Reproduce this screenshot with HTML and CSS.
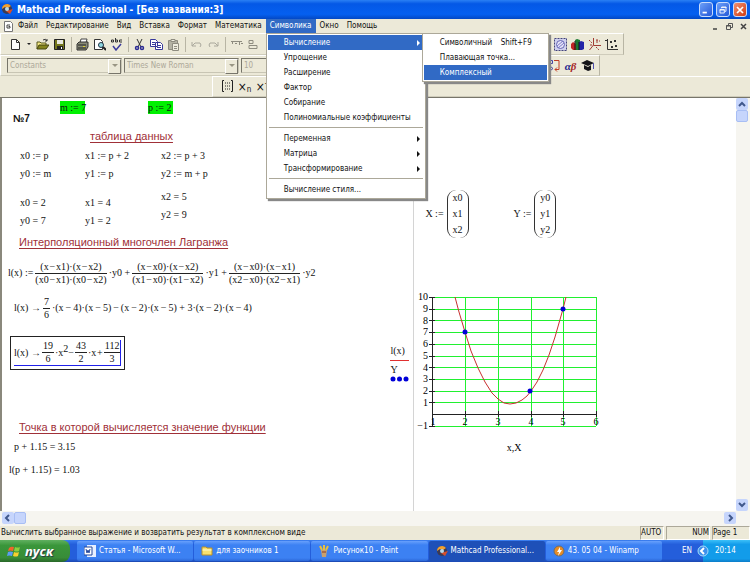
FILE: index.html
```html
<!DOCTYPE html>
<html lang="ru">
<head>
    <meta charset="UTF-8">
    <meta name="viewport" content="width=device-width, initial-scale=1.0">
    <title>Mathcad Professional</title>
    <link rel="stylesheet" href="styles.css">
</head>
<body>
    <!-- title bar -->
    <header class="titlebar">
        <svg class="icon" viewBox="0 0 13 13"><circle cx="6" cy="6" r="5" fill="#3d3a52"/><path d="M1 6a5 5 0 0 1 9-3L7 5 4 4z" fill="#f0a030"/><path d="M5 8l7-2-3 5z" fill="#d8502c"/><circle cx="6" cy="6" r="2" fill="#b8d8e8"/></svg>
        <h1 class="titlebar-text">Mathcad Professional - [Без названия:3]</h1>
        <button class="win-btn" aria-label="Свернуть"><svg viewBox="0 0 14 14"><path d="M3 10h5" stroke="#fff" stroke-width="2"/></svg></button>
        <button class="win-btn" aria-label="Восстановить"><svg viewBox="0 0 14 14" fill="none" stroke="#fff"><path d="M5.500 5V3.500h5v5H9M5 4h6"/><path d="M3.500 6.500h5v4h-5zM3 7h6"/></svg></button>
        <button class="win-btn win-close" aria-label="Закрыть"><svg viewBox="0 0 14 14"><path d="M3.500 3.500l7 7m0-7l-7 7" stroke="#fff" stroke-width="2"/></svg></button>
    </header>

    <!-- menu -->
    <nav class="menubar">
        <svg class="doc-icon" viewBox="0 0 11 11"><path d="M1.500.5h6l2 2v8h-8z" fill="#fff" stroke="#777"/><path d="M7 4H4v3h3V5.500H5.500" fill="none" stroke="#444"/></svg>
        <button class="menu-btn">Файл</button>
        <button class="menu-btn">Редактирование</button>
        <button class="menu-btn">Вид</button>
        <button class="menu-btn">Вставка</button>
        <button class="menu-btn">Формат</button>
        <button class="menu-btn">Математика</button>
        <div class="menu-holder">
            <button class="menu-btn active">Символика</button>
            <div class="menu">
                <div class="menu-holder">
                    <button class="menu-item active has-sub">Вычисление</button>
                    <div class="menu submenu">
                        <button class="menu-item"><span>Символичный</span><span>Shift+F9</span></button>
                        <button class="menu-item">Плавающая точка...</button>
                        <button class="menu-item active">Комплексный</button>
                    </div>
                </div>
                <button class="menu-item">Упрощение</button>
                <button class="menu-item">Расширение</button>
                <button class="menu-item">Фактор</button>
                <button class="menu-item">Собирание</button>
                <button class="menu-item">Полиномиальные коэффициенты</button>
                <hr class="menu-line">
                <button class="menu-item has-sub">Переменная</button>
                <button class="menu-item has-sub">Матрица</button>
                <button class="menu-item has-sub">Трансформирование</button>
                <hr class="menu-line">
                <button class="menu-item">Вычисление стиля...</button>
            </div>
        </div>
        <button class="menu-btn">Окно</button>
        <button class="menu-btn">Помощь</button>
        <div class="doc-btns">
            <button class="doc-btn" aria-label="Свернуть документ"><svg viewBox="0 0 9 9"><path d="M2 7h4" stroke="#444" stroke-width="1.500"/></svg></button>
            <button class="doc-btn" aria-label="Восстановить документ"><svg viewBox="0 0 9 9" fill="none" stroke="#555"><path d="M3.500 3V1.500h4v4H6M1.500 3.500h4v4h-4zM1 4h5"/></svg></button>
            <button class="doc-btn" aria-label="Закрыть документ"><svg viewBox="0 0 9 9"><path d="M2 2l5 5m0-5l-5 5" stroke="#444" stroke-width="1.500"/></svg></button>
        </div>
    </nav>

    <!-- toolbars -->
    <div class="toolbars">
        <div class="toolbar toolbar-main">
            <button class="tool" aria-label="Создать"><svg viewBox="0 0 13 13"><path d="M2.500 1.500h5l3 3v7h-8z" fill="#fff" stroke="#333"/><path d="M7.500 1.500v3h3" fill="none" stroke="#333"/></svg></button>
            <span class="caret"></span>
            <button class="tool" aria-label="Открыть"><svg viewBox="0 0 13 13"><path d="M1 11V4h3l1 1h5v2" fill="#f4e884" stroke="#55551a"/><path d="M1 11l2-4h10l-3 4z" fill="#85851d" stroke="#44440f"/><path d="M7 2q3-2 4 1m0-2v2H9" fill="none" stroke="#333"/></svg></button>
            <button class="tool" aria-label="Сохранить"><svg viewBox="0 0 13 13"><path d="M1.500 1.500h10v10h-10z" fill="#74761c" stroke="#222"/><path d="M4 2h6v4H4z" fill="#e8e8e0"/><path d="M4 8h6v4H4z" fill="#222"/><path d="M8 9h1v2H8z" fill="#fff"/></svg></button>
            <span class="tool-line"></span>
            <button class="tool" aria-label="Печать"><svg viewBox="0 0 13 13"><path d="M4 5l1-4h6l-1 4" fill="#fff" stroke="#444"/><path d="M1 6l2-2h9v5l-2 3H1z" fill="#888a78" stroke="#333"/><path d="M2 7h8M2 10h8" stroke="#222"/><path d="M7 8.500h2" stroke="#e4d430"/></svg></button>
            <button class="tool" aria-label="Просмотр"><svg viewBox="0 0 13 13"><path d="M1.500 1.500h6l2 2v8h-8z" fill="#fff" stroke="#333"/><circle cx="8" cy="7" r="2.500" fill="#8fd8e0" stroke="#234"/><path d="M10 9l3 3" stroke="#222" stroke-width="2"/></svg></button>
            <button class="tool" aria-label="Орфография"><svg viewBox="0 0 13 13" fill="none"><path d="M1.500 4V2h2v2h-2M5.500 0v4h2V2h-2M12 2H9.500v2H12" stroke="#333"/><path d="M3 8l3 4 5-6" stroke="#3a3a9c" stroke-width="1.500"/></svg></button>
            <span class="tool-line"></span>
            <button class="tool" aria-label="Вырезать"><svg viewBox="0 0 13 13" fill="none"><path d="M4 1l4 8M9 1L5 9" stroke="#333"/><circle cx="4" cy="10" r="1.500" stroke="#2c2c94" stroke-width="1.500"/><circle cx="9" cy="10" r="1.500" stroke="#2c2c94" stroke-width="1.500"/></svg></button>
            <button class="tool" aria-label="Копировать"><svg viewBox="0 0 13 13" fill="#fff" stroke="#38389a"><path d="M.5 1.500h5l2 2v5h-7zM5.500 4.500h5l2 2v5h-7z"/><path d="M2 4.500h3M2 6.500h3M7 7.500h4M7 9.500h4"/></svg></button>
            <button class="tool" aria-label="Вставить"><svg viewBox="0 0 13 13" stroke="#8e8c80"><path d="M1.500 2.500h9v9h-9z" fill="#b4b2a4"/><path d="M4 1.500h4v2H4zM5.500 5.500h6v7h-6z" fill="#eeecdf"/><path d="M7 8.500h3M7 10.500h3"/></svg></button>
            <span class="tool-line"></span>
            <button class="tool" aria-label="Отменить"><svg viewBox="0 0 13 13" fill="none" stroke="#aaa89c"><path d="M2 4v4h4M2 8l3-3h5q2 2 0 4"/></svg></button>
            <button class="tool" aria-label="Вернуть"><svg viewBox="0 0 13 13" fill="none" stroke="#aaa89c"><path d="M11 4v4H7M11 8L8 5H3q-2 2 0 4"/></svg></button>
            <span class="tool-line"></span>
            <button class="tool" aria-label="Выровнять поперёк"><svg viewBox="0 0 13 13" fill="none" stroke="#8e8c80"><path d="M1 3.500h11M2.500 3v3M5 5.500h2M9.500 3v4M11 5.500h2"/></svg></button>
            <button class="tool" aria-label="Выровнять вниз"><svg viewBox="0 0 13 13" fill="none" stroke="#8e8c80"><path d="M2 2.500h4v3H2zM2 7.500h8v3H2z"/></svg></button>
            <div class="tool-group">
                <button class="tool" aria-label="Вычислить"><svg viewBox="0 0 13 13"><circle cx="6" cy="6" r="5" fill="#3f8a2c"/></svg></button>
                <button class="tool" aria-label="Мастер"><svg viewBox="0 0 13 13"><path d="M.5.5h12v12H.5z" fill="#cfd0ee" stroke="#44447c" stroke-dasharray="2 1"/><circle cx="6.500" cy="6.500" r="4" fill="#e6e4f8" stroke="#6666b4"/><path d="M3 8l6-5M4 10l6-5" stroke="#7a7ac8"/></svg></button>
                <button class="tool" aria-label="Графики"><svg viewBox="0 0 13 13"><path d="M0 6l2-2 3 2v6H2l-2-2z" fill="#c02424"/><path d="M4 2l2-1 3 1v10H5z" fill="#187830"/><path d="M8 4l2-1 3 1v7l-2 1H8z" fill="#2424a8"/><path d="M4 3v9M8 4v8" stroke="#111"/></svg></button>
                <button class="tool" aria-label="Оси"><svg viewBox="0 0 13 13" fill="none" stroke="#a03c34"><path d="M5.500 0v7l-4 5M5.500 7.500H13"/><path d="M1 2l3 3M9 1v4M8 3h4M8 9l3 3M2 7h2" stroke-dasharray="2 1"/></svg></button>
                <button class="tool" aria-label="Точки"><svg viewBox="0 0 13 13"><path d="M2.500 1v10.500H13M0 2.500h3" fill="none" stroke="#333"/><path d="M5 3h2v2H5zM9 2h2v2H9zM6 8h2v2H6zM10 7h2v2h-2z" fill="#333"/></svg></button>
            </div>
        </div>
        <div class="toolbar toolbar-format">
            <label class="combo"><select disabled aria-label="Стиль"><option>Constants</option></select></label>
            <label class="combo"><select disabled aria-label="Шрифт"><option>Times New Roman</option></select></label>
            <label class="combo combo-size"><select disabled aria-label="Размер"><option>10</option></select></label>
            <div class="tool-group">
                <button class="tool" aria-label="Программирование"><svg viewBox="0 0 13 13" fill="none"><path d="M1.500 1.500h4v3h-4zM3.500 5v3M1 9.500l2.500-2 2.500 2-2.500 2z" stroke="#4646a8"/><path d="M7 1.500h5v9H8m2-2l-2 2 2 2" stroke="#c03c24"/></svg></button>
                <button class="tool tool-greek" aria-label="Греческие буквы"><span class="alpha">α</span><span class="beta">β</span></button>
                <button class="tool" aria-label="Символьные вычисления"><svg viewBox="0 0 13 13"><path d="M0 4l6-3 7 3-6 3zM3 6v4l4 2 3-1V6L7 8z" fill="#141418"/><path d="M12.500 4v6" stroke="#5050b0"/></svg></button>
            </div>
        </div>
        <div class="toolbar toolbar-math">
            <button class="tool" aria-label="Матрица"><svg viewBox="0 0 13 13" fill="none" stroke="#222"><path d="M3 .5H1.500v11H3M10 .5h1.500v11H10"/><path d="M4 3h6M4 6h6M4 9h6" stroke-dasharray="1 1"/></svg></button>
            <button class="tool tool-x" aria-label="Индекс">×<sub>n</sub></button>
            <button class="tool tool-x" aria-label="Обратная">×<sup>-</sup></button>
        </div>
    </div>

    <!-- worksheet -->
    <main class="workspace">
        <section class="page page-left">
            <div class="consts">
                <b class="number">№7</b>
                <span class="const">m := 7</span>
                <span class="const">p := 2</span>
            </div>
            <h2 class="caption caption-table">таблица данных</h2>
            <div class="data">
                <div class="data-col"><span>x0 := p</span><span>y0 := m</span><span class="result">x0 = 2</span><span>y0 = 7</span></div>
                <div class="data-col"><span>x1 := p + 2</span><span>y1 := p</span><span class="result">x1 = 4</span><span>y1 = 2</span></div>
                <div class="data-col data-high"><span>x2 := p + 3</span><span>y2 := m + p</span><span class="result">x2 = 5</span><span>y2 = 9</span></div>
            </div>
            <h2 class="caption">Интерполяционный многочлен Лагранжа</h2>
            <div class="math math-define">
                <span>l(x) :=</span>
                <span class="frac"><span>(x&hairsp;−&hairsp;x1)·(x&hairsp;−&hairsp;x2)</span><span>(x0&hairsp;−&hairsp;x1)·(x0&hairsp;−&hairsp;x2)</span></span>
                <span>·y0 +</span>
                <span class="frac"><span>(x&hairsp;−&hairsp;x0)·(x&hairsp;−&hairsp;x2)</span><span>(x1&hairsp;−&hairsp;x0)·(x1&hairsp;−&hairsp;x2)</span></span>
                <span>·y1 +</span>
                <span class="frac"><span>(x&hairsp;−&hairsp;x0)·(x&hairsp;−&hairsp;x1)</span><span>(x2&hairsp;−&hairsp;x0)·(x2&hairsp;−&hairsp;x1)</span></span>
                <span>·y2</span>
            </div>
            <div class="math math-step">
                <span>l(x) →</span>
                <span class="frac"><span>7</span><span>6</span></span>
                <span>·(x&thinsp;−&thinsp;4)·(x&thinsp;−&thinsp;5)&thinsp;−&thinsp;(x&thinsp;−&thinsp;2)·(x&thinsp;−&thinsp;5) + 3·(x&thinsp;−&thinsp;2)·(x&thinsp;−&thinsp;4)</span>
            </div>
            <div class="answer">
                <div class="math math-cursor">
                    <span>l(x) →</span>
                    <span class="frac"><span>19</span><span>6</span></span>
                    <span>·x<sup>2</sup>−</span>
                    <span class="frac"><span>43</span><span>2</span></span>
                    <span>·x&hairsp;+</span>
                    <span class="frac"><span>112</span><span>3</span></span>
                </div>
            </div>
            <h2 class="caption">Точка в которой вычисляется значение функции</h2>
            <p class="value">p + 1.15 = 3.15</p>
            <p class="value value-out">l(p + 1.15) = 1.03</p>
        </section>
        <section class="page page-right">
            <div class="vectors">
                <div class="math"><span>X :=</span><span class="matrix"><span>x0</span><span>x1</span><span>x2</span></span></div>
                <div class="math"><span>Y :=</span><span class="matrix"><span>y0</span><span>y1</span><span>y2</span></span></div>
            </div>
            <div class="plot">
                <div class="legend">
                    <span class="legend-line">l(x)</span>
                    <span>Y</span>
                    <svg width="19" height="6" viewBox="0 0 19 6" fill="#0000d8"><circle cx="3" cy="3" r="2.500"/><circle cx="9.500" cy="3" r="2.500"/><circle cx="16" cy="3" r="2.500"/></svg>
                </div>
                <!-- 33px per unit of x, 12px per unit of y, origin corner at (18, 6) -->
                <svg class="graph" width="188" height="162" viewBox="0 0 188 162">
                    <path class="grid" d="M51 6v129M84 6v129M117 6v129M149 6v129M182 6v129M18 6h164M18 18h164M18 29h164M18 41h164M18 53h164M18 65h164M18 76h164M18 88h164M18 100h164M18 111h164M18 135h164"/>
                    <path class="axis" d="M18 6v129M18 123h164M15 6h6M15 18h6M15 29h6M15 41h6M15 53h6M15 65h6M15 76h6M15 88h6M15 100h6M15 111h6M15 135h6M51 120v6M84 120v6M117 120v6M149 120v6M182 120v6"/>
                    <path class="curve" d="M41 6L45 21 51 41 57 60 64 77 71 91 78 102 84 108 90 112 96 113 102 112 108 109 113 105 117 100 123 91 129 79 135 64 141 46 149 18 152 6"/>
                    <g fill="#0000d8"><circle cx="51" cy="41" r="2.500"/><circle cx="116" cy="100" r="2.500"/><circle cx="149" cy="18" r="2.500"/></g>
                    <g text-anchor="end">
                        <text x="14" y="9">10</text><text x="14" y="21">9</text><text x="14" y="33">8</text><text x="14" y="44">7</text><text x="14" y="56">6</text><text x="14" y="68">5</text><text x="14" y="80">4</text><text x="14" y="91">3</text><text x="14" y="103">2</text><text x="14" y="115">1</text><text x="14" y="138">−1</text>
                    </g>
                    <g text-anchor="middle">
                        <text x="19" y="134">1</text><text x="51" y="134">2</text><text x="84" y="134">3</text><text x="117" y="134">4</text><text x="149" y="134">5</text><text x="182" y="134">6</text>
                        <text x="100" y="160">x,X</text>
                    </g>
                </svg>
            </div>
        </section>
        <div class="scroll scroll-y">
            <button class="scroll-btn" aria-label="Вверх"><svg viewBox="0 0 12 12"><path d="M3 8l3-3 3 3"/></svg></button>
            <span class="scroll-thumb"></span>
            <button class="scroll-btn scroll-end" aria-label="Вниз"><svg viewBox="0 0 12 12"><path d="M3 4l3 3 3-3"/></svg></button>
        </div>
    </main>
    <div class="scroll scroll-x">
        <button class="scroll-btn" aria-label="Влево"><svg viewBox="0 0 12 12"><path d="M7 3L4 6l3 3"/></svg></button>
        <span class="scroll-thumb"></span>
        <button class="scroll-btn scroll-end" aria-label="Вправо"><svg viewBox="0 0 12 12"><path d="M5 3l3 3-3 3"/></svg></button>
    </div>

    <div class="status">
        <span class="status-text">Вычислить выбранное выражение и возвратить результат в комплексном виде</span>
        <span class="status-cell">AUTO</span>
        <span class="status-cell status-num">NUM</span>
        <span class="status-cell status-page">Page 1</span>
    </div>

    <!-- taskbar -->
    <footer class="taskbar">
        <button class="start">
            <svg viewBox="0 0 14 13"><path d="M2 3q2-2 5-1L6 6Q3 5 1 6z" fill="#f0642c"/><path d="M8 2q3 1 5 0l-1 4q-2 1-5 0z" fill="#8cd03c"/><path d="M1 7q2-1 5 0l-1 4q-3-1-5 0z" fill="#5c9cf4"/><path d="M7 7q3 1 5 0l-1 4q-2 1-5 0z" fill="#f8d030"/></svg>
            пуск
        </button>
        <div class="tasks">
            <button class="task"><svg viewBox="0 0 12 12"><path d="M3 0h9v12H3z" fill="#e8f0ff"/><path d="M0 2h8v8H0z" fill="#fff" stroke="#24489c"/><path d="M2 4l1 4 1-3 1 3 1-4" fill="none" stroke="#24489c"/></svg><span>Статья - Microsoft W...</span></button>
            <button class="task"><svg viewBox="0 0 12 12"><path d="M1 2h4l1 1h5v7H1z" fill="#f8e070" stroke="#b89028"/><path d="M1.500 5h9" stroke="#fffbd0"/></svg><span>для заочников 1</span></button>
            <button class="task"><svg viewBox="0 0 12 12"><path d="M3 5h6l-1 7H4z" fill="#c8a070"/><path d="M4 5L2 1M6 5V0M8 5l2-4" stroke="#e8c040" stroke-width="2"/><path d="M4 7h4" stroke="#8c3820"/></svg><span>Рисунок10 - Paint</span></button>
            <button class="task task-active"><svg viewBox="0 0 12 12"><circle cx="6" cy="6" r="5" fill="#3d3a52"/><path d="M1 6a5 5 0 0 1 9-3L7 5 4 4z" fill="#f0a030"/><path d="M5 8l7-2-3 5z" fill="#d8502c"/><circle cx="6" cy="6" r="2" fill="#b8d8e8"/></svg><span>Mathcad Professional...</span></button>
            <button class="task"><svg viewBox="0 0 12 12"><circle cx="6" cy="6" r="5" fill="#e88c24" stroke="#6c6c6c"/><path d="M7 2L4 7h2l-1 4 4-6H7z" fill="#fff"/></svg><span>43. 05 04 - Winamp</span></button>
        </div>
        <span class="lang">EN</span>
        <div class="tray">
            <button class="tray-btn" aria-label="Показать значки"><svg viewBox="0 0 12 12"><circle cx="6" cy="6" r="5" fill="#3c90ec" stroke="#a4dcfc"/><path d="M7 3L4 6l3 3" fill="none" stroke="#fff" stroke-width="2"/></svg></button>
            <time>20:14</time>
        </div>
    </footer>
</body>
</html>
```
FILE: styles.css
```css
* {
    box-sizing: border-box;
}
body {
    display: flex;
    flex-direction: column;
    height: 100vh;
    margin: 0;
    overflow: hidden;
    background: #ece9d8;
    color: #111;
    font: 8px/12px "DejaVu Sans Condensed", "DejaVu Sans", sans-serif;
}
button {
    padding: 0;
    border: none;
    background: none;
    color: inherit;
    font: inherit;
    white-space: nowrap;
}
svg {
    display: block;
    flex: none;
}
/* title bar */
.titlebar {
    display: flex;
    flex: none;
    align-items: center;
    gap: 3px;
    height: 19px;
    padding: 0 3px 0 1px;
    background: linear-gradient(#2a80f4, #0458e6 20%, #0560f0 75%, #0348c4);
    color: #fff;
}
.icon {
    width: 13px;
    height: 13px;
}
.titlebar-text {
    flex: 1;
    margin: 0;
    font-size: 10px;
    font-weight: bold;
}
.win-btn {
    width: 14px;
    height: 15px;
    border: 1px solid #c8dcfc;
    border-radius: 3px;
    background: linear-gradient(135deg, #6ca0f8, #2458d8);
}
.win-close {
    background: linear-gradient(135deg, #f09070, #d03c14);
}
/* menu */
.menubar {
    display: flex;
    flex: none;
    align-items: center;
    height: 14px;
    padding-left: 3px;
}
.doc-icon {
    width: 11px;
    height: 11px;
}
.menu-btn {
    display: block;
    height: 14px;
    padding: 0 4px;
}
.active {
    background: #316ac5;
    color: #fff;
}
.menu-holder {
    position: relative;
}
.menu {
    position: absolute;
    top: 14px;
    left: 0;
    z-index: 2;
    width: 160px;
    padding: 1px;
    border: 1px solid #aca899;
    background: #fff;
    box-shadow: 2px 2px 1px #888;
    color: #111;
}
.submenu {
    top: -2px;
    left: 154px;
    width: 127px;
}
.menu-item {
    display: flex;
    align-items: center;
    justify-content: space-between;
    width: 100%;
    height: 15px;
    padding: 0 15px 0 16px;
}
.has-sub {
    padding-right: 4px;
}
.has-sub::after {
    content: "";
    border: 3px solid transparent;
    border-left-color: currentColor;
    border-right: none;
}
.menu-line {
    height: 1px;
    margin: 2px 1px 3px;
    border: none;
    background: #aca899;
}
.doc-btns {
    display: flex;
    gap: 5px;
    margin-left: auto;
    padding-right: 2px;
}
.doc-btn {
    width: 9px;
    height: 9px;
}
/* toolbars */
.toolbars {
    flex: none;
    border-bottom: 1px solid #77756a;
}
.toolbar {
    display: flex;
    align-items: center;
    height: 21px;
    padding-left: 6px;
    border: 1px solid;
    border-color: #fff #b8b5a4 #cfccbb #fff;
}
.toolbar-main {
    width: 624px;
    height: 22px;
}
.toolbar-format {
    gap: 2px;
    width: 600px;
}
.toolbar-math {
    margin-left: 212px;
    border-right: none;
}
.tool {
    display: flex;
    align-items: center;
    justify-content: center;
    width: 17px;
    height: 17px;
}
.tool svg {
    width: 13px;
    height: 13px;
}
.tool-line {
    width: 1px;
    height: 15px;
    margin: 0 2px 0 3px;
    background: #b8b5a4;
}
.caret {
    margin: 0 3px;
    border: 2px solid transparent;
    border-top-color: #222;
    border-bottom: none;
}
.tool-group {
    display: flex;
    margin-left: auto;
    padding-right: 3px;
}
.tool-greek {
    font: italic bold 11px/12px "Liberation Serif", serif;
}
.alpha {
    color: #24248c;
}
.beta {
    color: #a82c2c;
}
.tool-x {
    font-size: 12px;
}
.tool-x sub,
.tool-x sup {
    font-size: 8px;
}
.tool-x sub {
    padding-top: 6px;
}
.tool-x sup {
    padding-bottom: 6px;
}
.combo {
    position: relative;
    width: 115px;
}
.combo-size {
    width: 40px;
}
.combo select {
    display: block;
    width: 100%;
    height: 15px;
    padding: 0 2px;
    border: 1px solid #77756a;
    border-color: #77756a #c8c5b4 #c8c5b4 #77756a;
    border-radius: 0;
    appearance: none;
    background: #ece9d8;
    color: #aca899;
    font: inherit;
    opacity: 1;
}
.combo::before {
    content: "";
    position: absolute;
    top: 1px;
    right: 1px;
    width: 11px;
    height: 13px;
    border: 1px solid;
    border-color: #fff #77756a #77756a #fff;
    background: #ece9d8;
}
.combo::after {
    content: "";
    position: absolute;
    top: 6px;
    right: 4px;
    border: 3px solid transparent;
    border-top-color: #999684;
    border-bottom: none;
}
/* worksheet */
.workspace {
    display: flex;
    flex: 1;
    min-height: 0;
    border-left: 2px solid #8a887c;
    background: #fff;
    font: 10px/12px "Liberation Serif", serif;
}
.page-left {
    flex: 0 0 55%;
    padding-left: 6px;
}
.page-right {
    flex: 1;
    min-width: 0;
    border-left: 1px solid #d4d4d4;
}
.page span {
    white-space: nowrap;
}
.consts {
    display: flex;
    padding: 3px 0 0 5px;
}
.number {
    width: 47px;
    padding-top: 12px;
    font: bold 10px/12px "Liberation Sans", sans-serif;
}
.const {
    width: 25px;
    height: 13px;
    margin-right: 63px;
    padding-top: 1px;
    background: #00f000;
}
.caption {
    width: max-content;
    margin: 0 0 0 11px;
    color: #a03038;
    font: 11px/16px "Liberation Sans", sans-serif;
    text-decoration: underline;
    text-underline-offset: 2px;
}
.caption-table {
    margin: 3px 0 0 82px;
}
.data {
    display: flex;
    gap: 20px;
    padding: 6px 0 7px 12px;
}
.data-col {
    display: flex;
    flex-direction: column;
    gap: 6px;
    min-width: 45px;
}
.data-col:nth-child(2) {
    min-width: 56px;
}
.result {
    margin-top: 11px;
}
.data-high .result {
    margin-top: 5px;
}
.math {
    display: flex;
    align-items: center;
    gap: 3px;
}
.math-define {
    gap: 2px;
    height: 32px;
    margin-top: 7px;
}
.math-step {
    gap: 2px;
    height: 26px;
    margin: 6px 0 0 6px;
}
.frac {
    display: flex;
    flex-direction: column;
    text-align: center;
}
.frac span:first-child {
    padding: 0 1px;
    border-bottom: 1px solid #222;
}
.answer {
    width: max-content;
    margin: 15px 0 49px 2px;
    padding: 3px;
    border: 1px solid #222;
}
.math-cursor {
    gap: 1px;
    border: 1px solid #2020e8;
    border-width: 0 1px 1px 0;
}
.math sup {
    font-size: 10px;
    line-height: 1px;
}
.value {
    margin: 6px 0 0 6px;
}
.value-out {
    margin: 11px 0 0 1px;
}
.vectors {
    display: flex;
    gap: 45px;
    padding: 92px 0 0 11px;
}
.matrix {
    display: flex;
    flex-direction: column;
    gap: 4px;
    padding: 2px 5px;
    border: 1px solid #333;
    border-width: 0 1px;
    border-radius: 9px;
}
/* the legend hangs over the page edge */
.plot {
    display: flex;
    gap: 5px;
    margin: 53px 0 0 -24px;
}
.legend {
    display: flex;
    flex-direction: column;
    align-items: flex-start;
    padding-top: 54px;
}
.legend-line {
    width: 19px;
    margin-bottom: 3px;
    padding-bottom: 3px;
    border-bottom: 1px solid #e03030;
}
.graph {
    font-size: 10px;
}
.grid {
    fill: none;
    stroke: #20f030;
    shape-rendering: crispEdges;
}
.axis {
    fill: none;
    stroke: #222;
    shape-rendering: crispEdges;
}
.curve {
    fill: none;
    stroke: #c83030;
}
/* scroll bars */
.scroll {
    display: flex;
    flex: none;
    background: #f6f5f0;
}
.scroll-y {
    flex-direction: column;
    width: 14px;
    padding: 0 2px 0 0;
}
.scroll-x {
    height: 15px;
    padding: 1px 14px 2px 2px;
}
.scroll-btn {
    width: 12px;
    height: 12px;
    border-radius: 2px;
    background: #c6d5fc;
}
.scroll-btn path {
    fill: none;
    stroke: #40588c;
    stroke-width: 2;
}
.scroll-thumb {
    width: 12px;
    height: 12px;
    border: 1px solid #a8bef4;
    border-radius: 2px;
    background: #c6d5fc;
}
.scroll-end {
    margin-top: auto;
}
.scroll-x .scroll-end {
    margin: 0 0 0 auto;
}
/* status bar */
.status {
    display: flex;
    flex: none;
    height: 14px;
    line-height: 14px;
}
.status-text {
    flex: 1;
    padding-left: 1px;
}
.status-cell {
    width: 24px;
    margin-left: 2px;
    border: 1px solid;
    border-color: #aca899 #fff #fff #aca899;
    line-height: 12px;
}
.status-num {
    width: 44px;
    text-align: right;
}
.status-page {
    width: 38px;
}
/* taskbar */
.taskbar {
    display: flex;
    flex: none;
    align-items: center;
    height: 22px;
    background: linear-gradient(#3c80f0, #245edb 20%, #245edb 85%, #1c48b0);
    color: #fff;
}
.start {
    display: flex;
    align-items: center;
    gap: 4px;
    width: 70px;
    height: 22px;
    padding-left: 7px;
    border-radius: 0 8px 8px 0;
    background: linear-gradient(#60b060, #3a963a 25%, #388c38 80%, #286828);
    font: italic bold 13px/16px "Open Sans", sans-serif;
    text-shadow: 1px 1px 1px #234;
}
.start svg {
    width: 14px;
    height: 13px;
}
.tasks {
    display: flex;
    flex: 1;
    gap: 1px;
    min-width: 0;
    padding: 0 20px 0 7px;
}
.task {
    display: flex;
    flex: 1;
    align-items: center;
    gap: 3px;
    min-width: 0;
    height: 20px;
    padding-left: 7px;
    border-radius: 2px;
    background: linear-gradient(#68a0fc, #3c81f3 20%, #3c81f3 85%, #2c68d8);
}
.task svg {
    width: 12px;
    height: 12px;
}
.task-active {
    background: #1e50b8;
}
.lang {
    width: 21px;
}
.tray {
    display: flex;
    align-items: center;
    gap: 6px;
    width: 47px;
    height: 22px;
    background: linear-gradient(#3cc0f8, #129cea 20%, #129cea 85%, #0c7cc8);
}
.tray-btn {
    width: 12px;
    height: 12px;
    margin-left: -6px;
}
```
